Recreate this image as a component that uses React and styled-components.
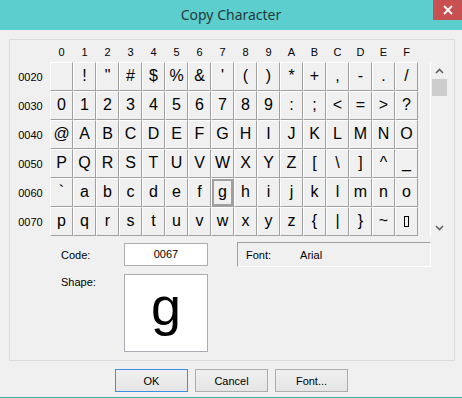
import React from 'react';
import styled, { createGlobalStyle } from 'styled-components';

const GlobalStyle = createGlobalStyle`
  html, body {
    margin: 0;
    padding: 0;
    background: #f0f0f0;
  }
  * {
    box-sizing: border-box;
  }
`;

const Window = styled.div`
  position: relative;
  width: 462px;
  height: 398px;
  display: flex;
  flex-direction: column;
  background: #f0f0f0;
  border-bottom: 1px solid #4fa9a5;
  font-family: "Liberation Sans", Arial, sans-serif;
  font-size: 11px;
  color: #000;
`;

const TitleBar = styled.div`
  height: 30px;
  flex: none;
  background: #5ccece;
  display: flex;
  align-items: center;
  justify-content: center;
  font-family: "Noto Sans", "Open Sans", sans-serif;
  font-size: 14px;
  color: #253a3a;
  padding-bottom: 1px;
`;

const CloseButton = styled.div`
  position: absolute;
  top: 0;
  right: 0;
  width: 29px;
  height: 20px;
  background: #c75050;
  display: flex;
  align-items: center;
  justify-content: center;
`;

const Panel = styled.div`
  margin: 9px 7px 0 9px;
  height: 322px;
  flex: none;
  border: 1px solid #dcdcdc;
`;

const CharArea = styled.div`
  display: flex;
  align-items: flex-start;
`;

const CharGrid = styled.div`
  display: grid;
  grid-template-columns: 40px repeat(16, 23px);
  grid-template-rows: 22px repeat(6, 29px);
`;

const ColHead = styled.div`
  display: flex;
  align-items: flex-end;
  justify-content: center;
  padding-bottom: 4px;
`;

const RowHead = styled.div`
  display: flex;
  align-items: center;
  justify-content: center;
  padding-left: 1px;
`;

const Cell = styled.div`
  display: flex;
  align-items: center;
  justify-content: center;
  font-size: 16px;
  border-style: solid;
  border-width: 1px;
  border-color: #ffffff #a0a0a0 #a0a0a0 #ffffff;
  box-shadow: ${p => (p.$selected ? 'inset 0 0 0 2px #a0a0a0' : 'none')};
  padding-bottom: 1px;
`;

const BoxGlyph = styled.span`
  width: 5px;
  height: 11px;
  border: 1px solid #000;
`;

const ScrollBar = styled.div`
  margin: 22px 0 0 12px;
  width: 17px;
  height: 174px;
  border-left: 1px solid #ffffff;
  display: flex;
  flex-direction: column;
  align-items: center;
`;

const Arrow = styled.div`
  height: 17px;
  width: 16px;
  display: flex;
  align-items: center;
  justify-content: center;
  flex: none;
`;

const Thumb = styled.div`
  width: 15px;
  height: 17px;
  background: #cdcdcd;
`;

const Spacer = styled.div`
  flex: 1;
`;

const InfoArea = styled.div`
  display: grid;
  grid-template-columns: 63px 84px 29px 194px;
  grid-template-rows: 23px 78px;
  row-gap: 8px;
  padding: 7px 0 0 51px;
`;

const Label = styled.div`
  grid-column: 1;
  grid-row: ${p => p.$row};
  align-self: ${p => (p.$row === 2 ? 'start' : 'center')};
  padding-top: ${p => (p.$row === 2 ? '2px' : '0')};
`;

const CodeField = styled.div`
  grid-column: 2;
  grid-row: 1;
  background: #fff;
  border: 1px solid #abadb3;
  text-align: center;
  padding-top: 4px;
`;

const FontBox = styled.div`
  grid-column: 4;
  grid-row: 1;
  align-self: center;
  height: 25px;
  border-style: solid;
  border-width: 1px;
  border-color: #a0a0a0 #ffffff #ffffff #a0a0a0;
  display: flex;
  align-items: center;
  padding-left: 8px;
`;

const FontName = styled.span`
  margin-left: 29px;
`;

const ShapeBox = styled.div`
  grid-column: 2;
  grid-row: 2;
  background: #fff;
  border: 1px solid #abadb3;
  display: flex;
  align-items: center;
  justify-content: center;
  font-size: 54px;
  line-height: 1;
  padding-bottom: 14px;
`;

const ButtonRow = styled.div`
  display: flex;
  justify-content: center;
  gap: 7px;
  margin-top: 8px;
  padding-left: 1px;
`;

const Button = styled.div`
  width: 73px;
  height: 23px;
  display: flex;
  align-items: center;
  justify-content: center;
  border: 1px solid ${p => (p.$default ? '#3c8fe0' : '#adadad')};
  background: linear-gradient(#f0f0f0, #e5e5e5);
`;

const hex = '0123456789ABCDEF'.split('');
const rows = [0x20, 0x30, 0x40, 0x50, 0x60, 0x70];

export default function App() {
  return (
    <>
      <GlobalStyle />
      <Window>
        <TitleBar>Copy Character</TitleBar>
        <CloseButton>
          <svg width="10" height="10" viewBox="0 0 10 10">
            <path d="M1 1 L9 9 M9 1 L1 9" stroke="#fff" strokeWidth="1.8" />
          </svg>
        </CloseButton>
        <Panel>
          <CharArea>
            <CharGrid>
              <div />
              {hex.map(h => (
                <ColHead key={h}>{h}</ColHead>
              ))}
              {rows.map(r => (
                <React.Fragment key={r}>
                  <RowHead>{r.toString(16).padStart(4, '0').toUpperCase()}</RowHead>
                  {hex.map((h, i) => {
                    const code = r + i;
                    return (
                      <Cell key={h} $selected={code === 0x67}>
                        {code === 0x7f ? <BoxGlyph /> : String.fromCharCode(code)}
                      </Cell>
                    );
                  })}
                </React.Fragment>
              ))}
            </CharGrid>
            <ScrollBar>
              <Arrow>
                <svg width="9" height="6" viewBox="0 0 9 6">
                  <path d="M1 5 L4.5 1.5 L8 5" stroke="#606060" strokeWidth="1.6" fill="none" />
                </svg>
              </Arrow>
              <Thumb />
              <Spacer />
              <Arrow>
                <svg width="9" height="6" viewBox="0 0 9 6">
                  <path d="M1 1 L4.5 4.5 L8 1" stroke="#606060" strokeWidth="1.6" fill="none" />
                </svg>
              </Arrow>
            </ScrollBar>
          </CharArea>
          <InfoArea>
            <Label $row={1}>Code:</Label>
            <CodeField>0067</CodeField>
            <FontBox>
              Font:<FontName>Arial</FontName>
            </FontBox>
            <Label $row={2}>Shape:</Label>
            <ShapeBox>g</ShapeBox>
          </InfoArea>
        </Panel>
        <ButtonRow>
          <Button $default>OK</Button>
          <Button>Cancel</Button>
          <Button>Font...</Button>
        </ButtonRow>
      </Window>
    </>
  );
}
